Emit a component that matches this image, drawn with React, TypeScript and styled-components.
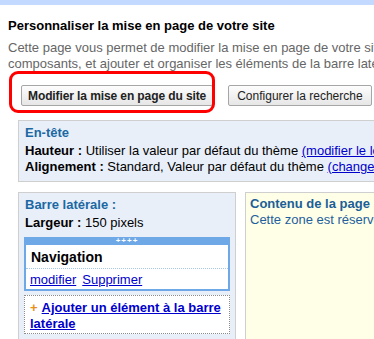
import React from "react";
import styled, { createGlobalStyle } from "styled-components";

const Global = createGlobalStyle`
  html, body { margin: 0; padding: 0; background: #fff; overflow: hidden; }
  body { font-family: "Liberation Sans", Arial, sans-serif; font-size: 13px; line-height: 16px; color: #000; }
`;

const TopBar = styled.div`
  height: 5px;
  background: #c3d9ff;
`;

const Page = styled.div`
  width: 760px;
  padding-left: 8px;
`;

const Title = styled.h1`
  margin: 13px 0 0;
  font-size: 13px;
  line-height: 16px;
  font-weight: bold;
  color: #000;
`;

const Description = styled.p`
  margin: 6px 0 0;
  color: #666;
  white-space: nowrap;
`;

const ButtonRow = styled.div`
  position: relative;
  display: flex;
  gap: 15px;
  margin-top: 13px;
  padding-left: 13px;
`;

const Button = styled.button<{ $strong?: boolean }>`
  box-sizing: border-box;
  height: 21px;
  padding: 0 ${(p) => (p.$strong ? 6 : 8)}px;
  border: 1px solid #a6a6a6;
  border-radius: 2px;
  background: linear-gradient(#fdfdfd, #e6e6e6);
  font-family: "Liberation Sans", Arial, sans-serif;
  font-size: 12px;
  font-weight: ${(p) => (p.$strong ? "bold" : "normal")};
  letter-spacing: ${(p) => (p.$strong ? "-0.1px" : "0")};
  color: #222;
  white-space: nowrap;
`;

const Highlight = styled.div`
  position: absolute;
  left: 1px;
  top: -14px;
  width: 206px;
  height: 42px;
  box-sizing: border-box;
  border: 3px solid #f00;
  border-radius: 9px;
  pointer-events: none;
`;

const Panel = styled.section`
  margin: 14px 0 0 10px;
  padding: 4px 6px 6px;
  border: 1px solid #cfcfcf;
  background: #e8eff9;
`;

const PanelHeading = styled.h2`
  margin: 0 0 2px;
  font-size: 13px;
  line-height: 16px;
  font-weight: bold;
  color: #1b68a3;
`;

const Line = styled.div`
  white-space: nowrap;
`;

const Label = styled.b`
  font-weight: bold;
`;

const Link = styled.a<{ $bold?: boolean }>`
  color: #0000cc;
  text-decoration: underline;
  font-weight: ${(p) => (p.$bold ? "bold" : "normal")};
  cursor: pointer;
`;

const Columns = styled.div`
  display: flex;
  gap: 9px;
  margin: 10px 0 0 10px;
  align-items: stretch;
`;

const Sidebar = styled.section`
  box-sizing: border-box;
  width: 218px;
  flex: none;
  padding: 4px 5px 30px;
  border: 1px solid #cfcfcf;
  background: #e8eff9;
`;

const SidebarText = styled.div`
  padding-left: 1px;
`;

const Widget = styled.div`
  margin-top: 6px;
  border: 2px solid #6ea8e6;
  border-top: none;
  background: #fff;
`;

const WidgetHandle = styled.div`
  height: 8px;
  margin: 0 -2px;
  background: #6ea8e6;
  color: #fff;
  font-size: 8px;
  line-height: 7px;
  font-weight: bold;
  text-align: center;
  letter-spacing: 1px;
`;

const WidgetTitle = styled.div`
  padding: 3px 5px 2px;
  font-size: 14px;
  line-height: 18px;
  font-weight: bold;
  border-bottom: 1px dotted #a9c9ea;
`;

const WidgetLinks = styled.div`
  display: flex;
  gap: 6px;
  padding: 3px 4px 1px;
`;

const AddBox = styled.div`
  margin-top: 4px;
  padding: 4px 5px 1px;
  border: 1px dotted #8c8c8c;
  background: #fff;
`;

const Plus = styled.span`
  color: #e8901c;
  font-weight: bold;
  margin-right: 4px;
`;

const Content = styled.section`
  flex: 1;
  padding: 3px 4px;
  border: 1px solid #cfcfcf;
  background: #fffee6;
  color: #1e5f9e;
`;

const ContentTitle = styled.div`
  font-weight: bold;
  color: #1b5f99;
  white-space: nowrap;
`;

export default function App() {
  return (
    <>
      <Global />
      <TopBar />
      <Page>
        <Title>Personnaliser la mise en page de votre site</Title>
        <Description>
          Cette page vous permet de modifier la mise en page de votre site, de redimensionner les
          <br />
          composants, et ajouter et organiser les éléments de la barre latérale.
        </Description>
        <ButtonRow>
          <Button $strong>Modifier la mise en page du site</Button>
          <Button>Configurer la recherche</Button>
          <Highlight />
        </ButtonRow>
        <Panel>
          <PanelHeading>En-tête</PanelHeading>
          <Line>
            <Label>Hauteur :</Label> Utiliser la valeur par défaut du thème{" "}
            <Link>(modifier le logo)</Link>
          </Line>
          <Line>
            <Label>Alignement :</Label> Standard, Valeur par défaut du thème{" "}
            <Link>(changer)</Link>
          </Line>
        </Panel>
        <Columns>
          <Sidebar>
            <SidebarText>
              <PanelHeading>Barre latérale :</PanelHeading>
              <Line>
                <Label>Largeur :</Label> 150 pixels
              </Line>
            </SidebarText>
            <Widget>
              <WidgetHandle>++++</WidgetHandle>
              <WidgetTitle>Navigation</WidgetTitle>
              <WidgetLinks>
                <Link>modifier</Link>
                <Link>Supprimer</Link>
              </WidgetLinks>
            </Widget>
            <AddBox>
              <Plus>+</Plus>
              <Link $bold>Ajouter un élément à la barre latérale</Link>
            </AddBox>
          </Sidebar>
          <Content>
            <ContentTitle>Contenu de la page</ContentTitle>
            <Line>Cette zone est réservée au contenu de la page.</Line>
          </Content>
        </Columns>
      </Page>
    </>
  );
}
